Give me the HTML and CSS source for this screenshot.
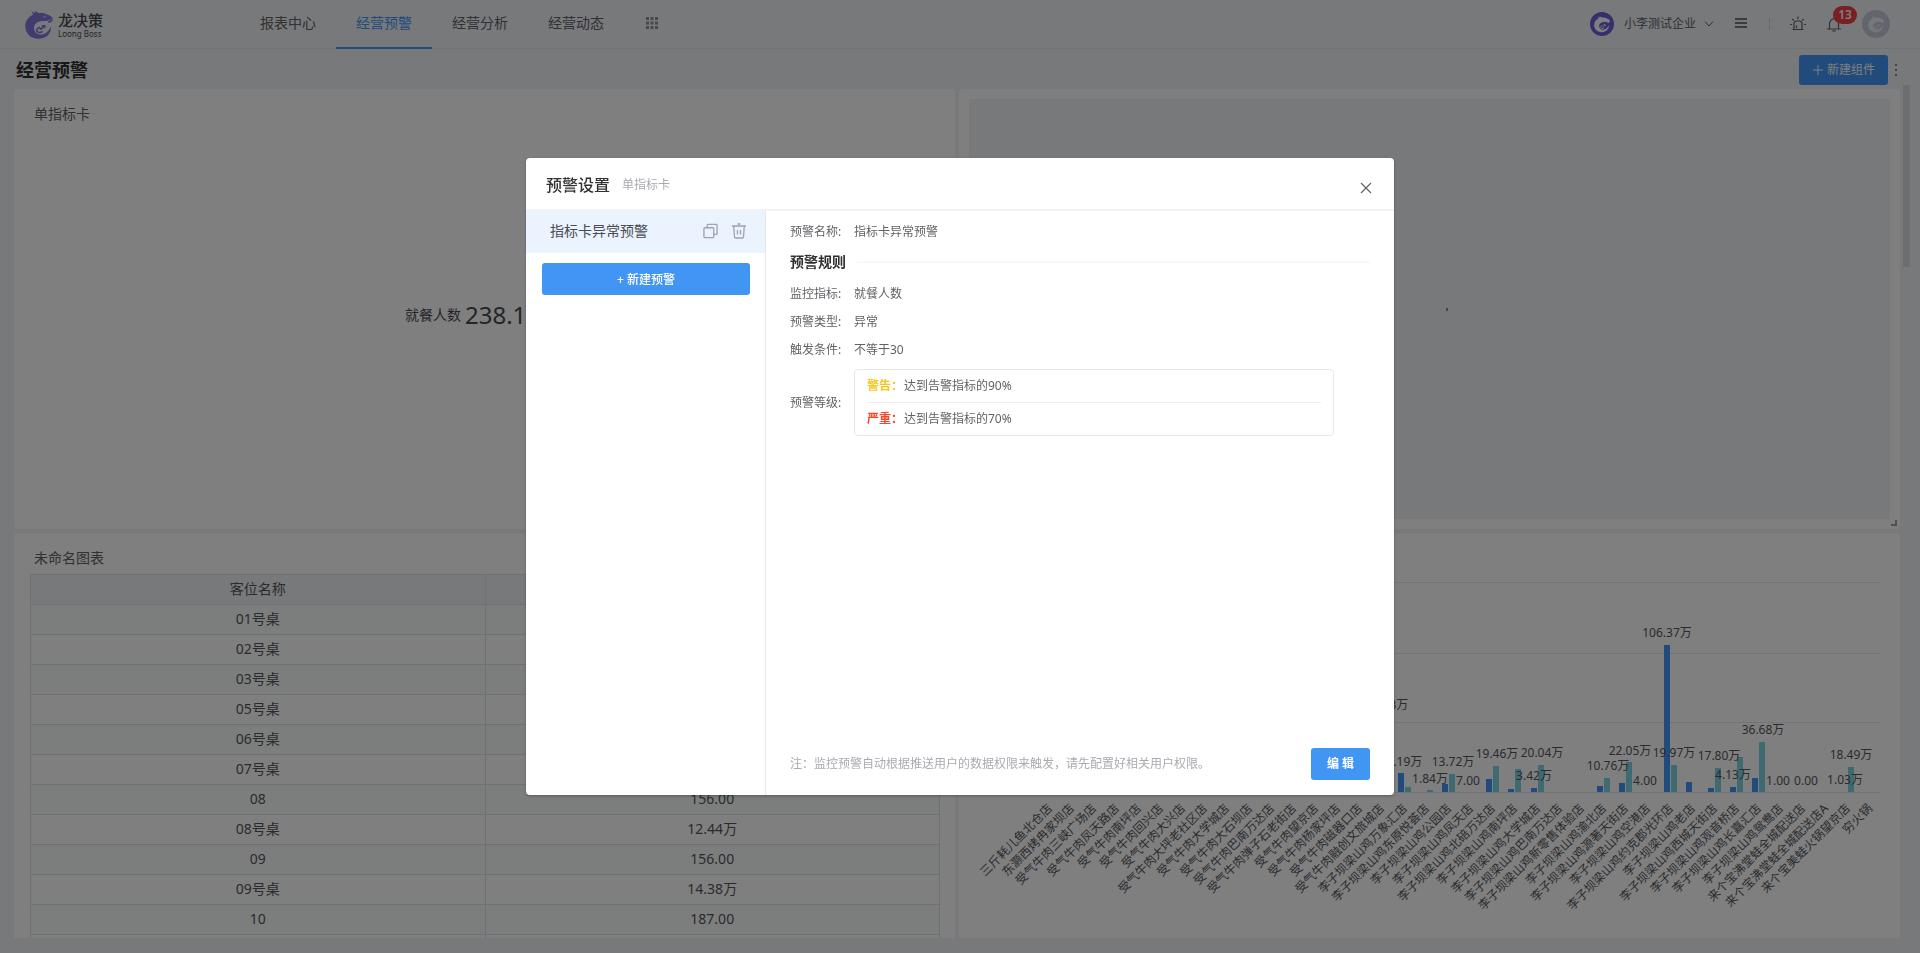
FILE: index.html
```html
<!DOCTYPE html>
<html lang="zh-CN">
<head>
<meta charset="utf-8">
<title>经营预警</title>
<link rel="stylesheet" href="styles.css">
</head>
<body>
<svg class="sprite" aria-hidden="true">
  <symbol id="dragon" viewBox="28 26 90 92">
    <path fill="currentColor" d="M49 27C53 33 57 34 62 36L60 28L72 35C84 34 94 36 101 41C110 44 117 48 117 56C116 62 111 66 105 67L100 60L91 61C74 60 58 66 57 82C56 96 67 106 80 104C93 103 104 95 111 79C114 99 97 118 71 118C46 118 29 101 29 78C29 60 40 47 54 41Z"/>
    <path fill="none" stroke="currentColor" stroke-width="5" d="M64 90L73 81L79 87L90 77M82 76L91 76L91 84M64 90C67 99 77 100 85 94"/>
    <path fill="none" stroke="#fff" stroke-width="2" d="M86 45L96 49M101 60L112 57"/>
  </symbol>
</svg>

<div class="app">
  <header class="topbar">
    <a class="brand" href="#">
      <svg class="brand-mark"><use href="#dragon"/></svg>
      <span class="brand-text"><span class="brand-name">龙决策</span><span class="brand-sub">Loong Boss</span></span>
    </a>
    <nav class="tabs">
      <a class="tab" href="#">报表中心</a>
      <a class="tab tab-active" href="#">经营预警</a>
      <a class="tab" href="#">经营分析</a>
      <a class="tab" href="#">经营动态</a>
      <button class="icon-btn apps" type="button" aria-label="更多应用">
        <svg width="12" height="12" viewBox="0 0 12 12" fill="#909399"><path d="M0 0h3v3H0zM4.500 0h3v3h-3zM9 0h3v3H9zM0 4.500h3v3H0zM4.500 4.500h3v3h-3zM9 4.500h3v3H9zM0 9h3v3H0zM4.500 9h3v3h-3zM9 9h3v3H9z"/></svg>
      </button>
    </nav>
    <div class="tools">
      <button class="company" type="button">
        <span class="avatar avatar-company"><svg><use href="#dragon"/></svg></span>
        <span>小李测试企业</span>
        <svg width="10" height="6" viewBox="0 0 10 6" fill="none" stroke="#606266"><path d="M1 .5L5 5L9 .5"/></svg>
      </button>
      <button class="icon-btn" type="button" aria-label="菜单">
        <svg width="12" height="12" viewBox="0 0 12 12" stroke="#77797e" stroke-width="2"><path d="M0 1h12M0 5h12M0 9h12"/></svg>
      </button>
      <span class="split"></span>
      <button class="icon-btn" type="button" aria-label="预警">
        <svg width="16" height="16" viewBox="0 0 16 16" fill="none" stroke="#606266" stroke-width="1.200"><path d="M4 13V7.500A2.500 2.500 0 0 1 6.500 5h3A2.500 2.500 0 0 1 12 7.500V13M2.500 13.500h11M8 .5V3M2.300 3l1.500 1.500M13.700 3l-1.500 1.500M0 8.500h2M14 8.500h2M6.500 12V9.500"/></svg>
      </button>
      <button class="icon-btn bell" type="button" aria-label="通知">
        <svg width="14" height="15" viewBox="0 0 14 15" fill="none" stroke="#606266" stroke-width="1.200"><path d="M0 12h14M2.500 12V6.500a4.500 4.500 0 0 1 9 0V12M7 2V.5M5.500 13.800h3"/></svg>
        <span class="badge">13</span>
      </button>
      <span class="avatar avatar-user"><svg><use href="#dragon"/></svg></span>
    </div>
  </header>

  <div class="page-head">
    <h1 class="page-title">经营预警</h1>
    <button class="btn btn-add" type="button"><svg width="10" height="10" viewBox="0 0 10 10" stroke="#fff"><path d="M5 0v10M0 5h10"/></svg>新建组件</button>
    <button class="icon-btn" type="button" aria-label="更多">
      <svg width="2" height="12" viewBox="0 0 2 12" fill="#8a8d93"><path d="M0 0h2v2H0zM0 5h2v2H0zM0 10h2v2H0z"/></svg>
    </button>
  </div>

  <main class="board">
    <section class="card">
      <h2 class="card-title">单指标卡</h2>
      <p class="metric"><span>就餐人数</span><span class="metric-value">238.14万</span></p>
    </section>
    <section class="card card-blank">
      <div class="blank"><span class="blank-dot"></span></div>
      <span class="resize"></span>
    </section>
    <section class="card">
      <h2 class="card-title">未命名图表</h2>
      <table class="grid">
        <thead><tr><th>客位名称</th><th>营业额</th></tr></thead>
        <tbody>
          <tr><td>01号桌</td><td>15.21万</td></tr>
          <tr><td>02号桌</td><td>13.06万</td></tr>
          <tr><td>03号桌</td><td>12.87万</td></tr>
          <tr><td>05号桌</td><td>11.95万</td></tr>
          <tr><td>06号桌</td><td>13.42万</td></tr>
          <tr><td>07号桌</td><td>12.10万</td></tr>
          <tr><td>08</td><td>156.00</td></tr>
          <tr><td>08号桌</td><td>12.44万</td></tr>
          <tr><td>09</td><td>156.00</td></tr>
          <tr><td>09号桌</td><td>14.38万</td></tr>
          <tr><td>10</td><td>187.00</td></tr>
          <tr><td></td><td></td></tr>
        </tbody>
      </table>
    </section>
    <section class="card">
      <svg class="chart" id="chart" viewBox="0 0 941 405" role="img" aria-label="门店数据柱状图"></svg>
    </section>
  </main>
  <span class="scroll-thumb"></span>
</div>

<div class="overlay">
  <section class="dialog" role="dialog" aria-labelledby="dialog-title">
    <header class="dialog-head">
      <h2 class="dialog-title" id="dialog-title">预警设置</h2>
      <span class="dialog-sub">单指标卡</span>
      <button class="icon-btn close" type="button" aria-label="关闭">
        <svg width="12" height="12" viewBox="0 0 12 12" stroke="#606266" stroke-width="1.200"><path d="M1 1l10 10M11 1L1 11"/></svg>
      </button>
    </header>
    <div class="dialog-body">
      <aside class="side">
        <div class="side-item">
          <span class="side-name">指标卡异常预警</span>
          <button class="icon-btn" type="button" aria-label="复制">
            <svg width="15" height="16" viewBox="0 0 16 16" fill="none" stroke="#a0a4ab" stroke-width="1.400"><rect x="1" y="4.500" width="10.500" height="10.500" rx="1"/><path d="M4.500 4.500V1.700q0-.7.7-.7h9.100q.7 0 .7.700v9.100q0 .7-.7.700h-2.800"/></svg>
          </button>
          <button class="icon-btn" type="button" aria-label="删除">
            <svg width="14" height="16" viewBox="0 0 14 16" fill="none" stroke="#a0a4ab" stroke-width="1.300"><path d="M0 3h14M5.500 1h3M1.700 3l.8 11q.1 1 1 1h7q.9 0 1-1l.8-11M5.500 7v4.500M8.500 7v4.500"/></svg>
          </button>
        </div>
        <button class="btn btn-new" type="button">+ 新建预警</button>
      </aside>
      <div class="detail">
        <dl class="fields">
          <dt>预警名称:</dt><dd>指标卡异常预警</dd>
        </dl>
        <h3 class="rule-title">预警规则</h3>
        <dl class="fields">
          <dt>监控指标:</dt><dd>就餐人数</dd>
          <dt>预警类型:</dt><dd>异常</dd>
          <dt>触发条件:</dt><dd>不等于30</dd>
          <dt class="levels-label">预警等级:</dt>
          <dd class="levels">
            <p class="level"><b class="warn">警告：</b>达到告警指标的90%</p>
            <p class="level"><b class="severe">严重：</b>达到告警指标的70%</p>
          </dd>
        </dl>
        <footer class="dialog-foot">
          <p class="note">注：监控预警自动根据推送用户的数据权限来触发，请先配置好相关用户权限。</p>
          <button class="btn btn-edit" type="button">编 辑</button>
        </footer>
      </div>
    </div>
  </section>
</div>
<script src="chart.js"></script>
</body>
</html>
```

FILE: styles.css
```css
* { box-sizing: border-box; }
body {
  margin: 0;
  font-family: "Noto Sans", "Noto Sans CJK SC", sans-serif;
  font-size: 12px;
  line-height: 20px;
  color: #606266;
  background: #f0f3f6;
}
h1, h2, h3, p, dl, dd { margin: 0; }
a { color: inherit; text-decoration: none; }
button { font: inherit; color: inherit; border: 0; padding: 0; background: none; cursor: pointer; }
svg { display: block; }
.sprite { position: absolute; width: 0; height: 0; }

.app { position: relative; height: 100vh; display: flex; flex-direction: column; overflow: hidden; }

.topbar { display: flex; align-items: stretch; height: 49px; padding: 0 30px 0 25px; border-bottom: 1px solid #e2e5e8; }
.brand { display: flex; align-items: center; gap: 5px; width: 215px; }
.brand-mark { width: 28px; height: 31px; color: #8078e0; }
.brand-text { display: flex; flex-direction: column; padding-top: 2px; color: #484b50; }
.brand-name { font-size: 15px; font-weight: 500; line-height: 18px; }
.brand-sub { font-size: 8px; line-height: 10px; }
.tabs { display: flex; font-size: 14px; }
.tab { height: 49px; padding: 0 20px; line-height: 46px; border-bottom: 2px solid transparent; }
.tab-active { color: #4096f8; border-color: #4096f8; }
.icon-btn { display: flex; align-items: center; justify-content: center; }
.apps { margin-left: 22px; padding-bottom: 2px; }
.tools { display: flex; align-items: center; margin-left: auto; }
.company { display: flex; align-items: center; gap: 8px; margin-right: 21px; }
.avatar { display: flex; align-items: center; justify-content: center; border-radius: 50%; color: #fff; }
.avatar svg { width: 16px; height: 18px; }
.avatar-company { width: 24px; height: 24px; background: #6a5fd8; margin-right: 2px; }
.avatar-user { width: 28px; height: 28px; background: #c5ccd8; color: #eceff3; margin-left: 21px; }
.split { width: 1px; height: 12px; margin: 0 20px 0 22px; background: #d0d3d8; }
.bell { position: relative; margin-left: 21px; }
.badge {
  position: absolute; left: 6px; top: -11px;
  min-width: 24px; height: 18px; border-radius: 9px;
  font-size: 12px; font-weight: 600; line-height: 18px; color: #fff; background: #f04044;
}

.page-head { display: flex; align-items: center; gap: 7px; height: 40px; padding: 2px 23px 0 16px; }
.page-title { flex: 1; font-size: 18px; font-weight: 700; line-height: 24px; color: #303133; }
.btn { border-radius: 3px; color: #fff; background: #4196f4; }
.btn-add { display: flex; align-items: center; gap: 4px; height: 30px; padding: 0 13px 0 14px; }

.board {
  flex: 1; min-height: 0; overflow: hidden;
  display: grid; grid-template-columns: 1fr 1fr; grid-auto-rows: 440px; gap: 4px;
  margin: 0 20px 15px 14px;
}
.card { display: flex; flex-direction: column; min-width: 0; padding: 15px 16px 16px; border-radius: 4px; background: #fff; overflow: hidden; }
.card-title { padding-left: 4px; font-size: 14px; font-weight: 400; line-height: 20px; }
.metric { flex: 1; display: flex; align-items: center; justify-content: center; gap: 4px; padding-bottom: 8px; font-size: 14px; color: #484b50; }
.metric-value { font-size: 24px; line-height: 32px; }
.card-blank { position: relative; padding: 10px; }
.blank { flex: 1; display: flex; align-items: center; justify-content: center; background: #f0f2f4; }
.blank-dot { width: 2px; height: 3px; margin-left: 34px; background: #5d9de0; }
.resize { position: absolute; right: 3px; bottom: 3px; width: 6px; height: 6px; border: solid #a0a0a0; border-width: 0 2px 2px 0; }

.grid { width: calc(100% + 1px); margin-top: 6px; border-collapse: collapse; table-layout: fixed; font-size: 14px; color: #54575c; }
.grid th, .grid td { height: 30px; padding: 0 0 2px; border: 1px solid #dfe4e8; text-align: center; font-weight: 400; }
.grid th { background: #f0f2f5; }
.grid tbody tr:nth-child(odd) { background: #f9fdfa; }

.chart { width: calc(100% + 32px); margin: -15px -16px; flex: none; }
.chart text { font-size: 12px; fill: #54575c; }
.chart .line { stroke: #e6e8ea; }
.chart .bar-a { fill: #4096f8; }
.chart .bar-b { fill: #7fd4e4; }

.scroll-thumb { position: absolute; right: 10px; top: 85px; width: 7px; height: 182px; background: #dcdcdc; }

.overlay { position: fixed; inset: 0; display: flex; align-items: center; justify-content: center; background: rgba(0, 0, 0, .5); }
.dialog {
  display: flex; flex-direction: column; width: 868px; max-width: 96vw; height: calc(100vh - 316px); min-height: 420px;
  border-radius: 4px; background: #fff; overflow: hidden; box-shadow: 0 1px 3px rgba(0, 0, 0, .3);
}
.dialog-head { display: flex; align-items: center; gap: 12px; height: 53px; padding: 2px 22px 0 20px; border-bottom: 2px solid #f2f2f2; }
.dialog-title { font-size: 16px; font-weight: 500; line-height: 24px; color: #303133; }
.dialog-sub { color: #a8abb0; }
.close { margin-left: auto; padding-top: 6px; }
.dialog-body { flex: 1; display: flex; min-height: 0; }
.side { width: 240px; flex: none; border-right: 1px solid #e6e6e6; }
.side-item { display: flex; align-items: center; gap: 14px; height: 42px; padding: 0 19px 2px 24px; background: #ebf3ff; }
.side-name { flex: 1; font-size: 14px; color: #484b50; }
.btn-new { display: block; width: 208px; height: 32px; margin: 10px 0 0 16px; padding-top: 2px; font-weight: 500; }
.detail { flex: 1; display: flex; flex-direction: column; padding: 7px 24px 15px; }
.fields { display: grid; grid-template-columns: 64px 1fr; line-height: 28px; align-items: center; }
.rule-title { display: flex; align-items: center; gap: 11px; margin: 3px 0 5px; font-size: 14px; font-weight: 600; line-height: 26px; color: #303133; }
.rule-title::after { content: ""; flex: 1; height: 2px; background: #f8f8f8; }
.levels { margin: 5px 36px 0 0; padding: 0 12px; border: 1px solid #e8e8e8; border-radius: 4px; }
.levels-label { padding-top: 5px; }
.level { line-height: 32px; }
.level + .level { border-top: 1px solid #ececec; }
.level b { display: inline-block; width: 37px; font-weight: 600; }
.warn { color: #fcc419; }
.severe { color: #f5452c; }
.dialog-foot { display: flex; align-items: center; justify-content: space-between; margin-top: auto; }
.note { color: #a8abb0; }
.btn-edit { width: 59px; height: 32px; font-weight: 600; }
```

FILE: chart.js
```js
const chart = document.getElementById("chart");
const NS = "http://www.w3.org/2000/svg";
const LEFT = 79, RIGHT = 921, BASE = 259;

// [store, height of first bar, height of second bar]
const stores = [
  ["三斤耗儿鱼北仓店", 0, 0], ["东灏西烤冉家坝店", 0, 0], ["受气牛肉三峡广场店", 0, 0],
  ["受气牛肉凤天路店", 0, 0], ["受气牛肉南坪店", 0, 0], ["受气牛肉回兴店", 0, 0],
  ["受气牛肉大兴店", 0, 0], ["受气牛肉大坪老社区店", 0, 0], ["受气牛肉大学城店", 0, 0],
  ["受气牛肉大石坝店", 0, 0], ["受气牛肉巴南万达店", 0, 0], ["受气牛肉弹子石老街店", 0, 0],
  ["受气牛肉望京店", 0, 0], ["受气牛肉杨家坪店", 0, 0], ["受气牛肉磁器口店", 0, 0],
  ["受气牛肉融创文旅城店", 0, 0], ["李子坝梁山鸡万象汇店", 19, 5], ["李子坝梁山鸡东原悦荟店", 0, 2],
  ["李子坝梁山鸡公园店", 8, 18], ["李子坝梁山鸡凤天店", 0, 0], ["李子坝梁山鸡北碚万达店", 13, 26],
  ["李子坝梁山鸡南坪店", 3, 23], ["李子坝梁山鸡大学城店", 4, 27], ["李子坝梁山鸡巴南万达店", 0, 0],
  ["李子坝梁山鸡新零售体验店", 0, 0], ["李子坝梁山鸡渝北店", 6, 14], ["李子坝梁山鸡源著天街店", 9, 30],
  ["李子坝梁山鸡空港店", 0, 0], ["李子坝梁山鸡约克郡光环店", 147, 27], ["李子坝梁山鸡老店", 10, 0],
  ["李子坝梁山鸡西城天街店", 4, 24], ["李子坝梁山鸡观音桥店", 5, 35], ["李子坝梁山鸡长嘉汇店", 14, 50],
  ["李子坝梁山鸡鸳鸯店", 0, 0], ["来个宝沸堂蛙全城配送店", 0, 0], ["来个宝沸堂蛙全城配送店A", 0, 0],
  ["来个宝美蛙火锅望京店", 0, 25], ["穷火锅", 0, 0]
];

// [text, centre x, baseline y]
const values = [
  ["55.43万", 428, 176], ["14.19万", 442, 233], ["1.84万", 471, 250], ["13.72万", 494, 233],
  ["7.00", 509, 252], ["19.46万", 538, 225], ["3.42万", 575, 247], ["20.04万", 583, 224],
  ["10.76万", 649, 237], ["22.05万", 671, 222], ["4.00", 686, 252], ["106.37万", 708, 104],
  ["19.97万", 715, 224], ["17.80万", 760, 227], ["4.13万", 774, 246], ["36.68万", 804, 201],
  ["1.00", 819, 252], ["0.00", 847, 252], ["1.03万", 886, 251], ["18.49万", 892, 226],
  ["0.00", 53, 262]
];

function add(tag, attrs, text) {
  const el = document.createElementNS(NS, tag);
  for (const key in attrs) el.setAttribute(key, attrs[key]);
  if (text) el.textContent = text;
  chart.appendChild(el);
}

[49, 120, 189, BASE].forEach(y =>
  add("line", { class: "line", x1: LEFT, x2: RIGHT, y1: y + 0.5, y2: y + 0.5 }));

const step = (RIGHT - LEFT) / stores.length;
stores.forEach(([name, a, b], i) => {
  const x = Math.round(LEFT + step * (i + 0.5));
  if (a) add("rect", { class: "bar-a", x: x - 6, y: BASE - a, width: 6, height: a });
  if (b) add("rect", { class: "bar-b", x: x + 1, y: BASE - b, width: 6, height: b });
  add("text", { "text-anchor": "end", transform: `translate(${x + 4} 276) rotate(-45)` }, name);
});
values.forEach(([text, x, y]) => add("text", { "text-anchor": "middle", x, y }, text));
```
